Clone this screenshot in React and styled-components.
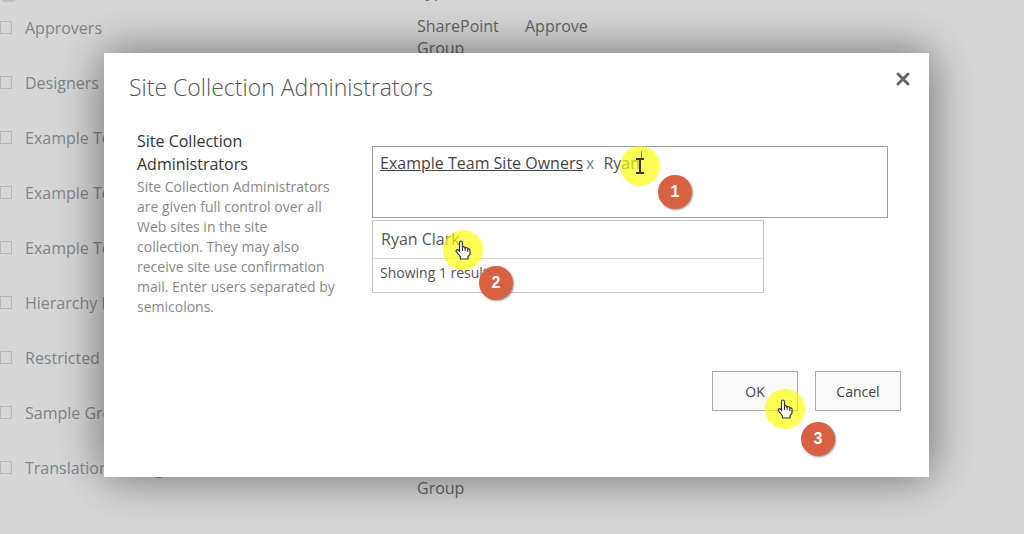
import React from 'react'
import styled, { createGlobalStyle } from 'styled-components'

const groups = [
  'Approvers',
  'Designers',
  'Example Team Site Members',
  'Example Team Site Owners',
  'Example Team Site Visitors',
  'Hierarchy Managers',
  'Restricted Readers',
  'Sample Group',
  'Translation Managers',
]

function HandCursor() {
  return (
    <Cursor viewBox="0 0 16 20">
      <path d="M4.500 11V3Q4.500 1 6 1T7.500 3V7Q8.200 6.500 9.200 6.900T10.200 8Q11 7.400 11.900 7.800T12.700 9Q13.500 8.600 14.300 9.100T15 10.500V14L13 17V19H5.500V17L1.200 11.500Q0.800 10 2.200 9.600Q3.500 9.800 4.500 11Z" fill="#fff" stroke="#333" strokeWidth="1.200" />
      <path d="M7.500 7V11M10.200 8V11M12.700 9V12" fill="none" stroke="#333" />
    </Cursor>
  )
}

function TextCursor() {
  return (
    <Cursor viewBox="0 0 16 20">
      <path d="M9.500 -5V3" fill="none" stroke="#8a8a3a" />
      <path d="M4 3H7L8 4L9 3H12M8 4V16M4 17H7L8 16L9 17H12" fill="none" stroke="#333" strokeWidth="2" />
    </Cursor>
  )
}

function App() {
  return (
    <Page>
      <GlobalStyle />
      <Permissions>
        <colgroup>
          <col width="25" />
          <col width="392" />
          <col width="108" />
          <col />
        </colgroup>
        <thead>
          <tr>
            <HeadCell><TickAll type="checkbox" aria-label="Select all" /></HeadCell>
            <HeadCell>Name</HeadCell>
            <HeadCell>Type</HeadCell>
            <HeadCell>Permission Levels</HeadCell>
          </tr>
        </thead>
        <tbody>
          {groups.map((name, i) => (
            <tr key={name}>
              <Cell><Tick type="checkbox" aria-label={name} /></Cell>
              <NameCell><GroupLink href="#">{name}</GroupLink></NameCell>
              <TypeCell>SharePoint Group</TypeCell>
              <Cell>{i === 0 ? 'Approve' : 'Design'}</Cell>
            </tr>
          ))}
        </tbody>
      </Permissions>

      <Overlay>
        <Dialog role="dialog" aria-labelledby="dialog-title">
          <TitleBar>
            <Title id="dialog-title">Site Collection Administrators</Title>
            <Close aria-label="Close">
              <svg width="14" height="14" viewBox="0 0 14 14">
                <path d="M2 2L12 12M12 2L2 12" stroke="#666" strokeWidth="3" strokeLinecap="round" />
              </svg>
            </Close>
          </TitleBar>

          <Section>
            <Info>
              <Label htmlFor="admins">Site Collection Administrators</Label>
              <Description>
                Site Collection Administrators are given full control over all Web sites in the site
                collection. They may also receive site use confirmation mail. Enter users separated by
                semicolons.
              </Description>
            </Info>
            <Picker>
              <PeopleBox>
                <Person href="#">Example Team Site Owners</Person>
                <Remove aria-label="Remove">x</Remove>
                <NameInput id="admins" defaultValue="Ryan" />
                <Marker $left={247} $top={-1}><TextCursor /></Marker>
                <Step $left={285} $top={28}>1</Step>
              </PeopleBox>
              <Results>
                <Result>Ryan Clark</Result>
                <Count>Showing 1 result</Count>
                <Marker $left={70} $top={9}><HandCursor /></Marker>
                <Step $left={106} $top={45}>2</Step>
              </Results>
            </Picker>
          </Section>

          <Footer>
            <Action>
              OK
              <Marker $left={52} $top={17}><HandCursor /></Marker>
              <Step $left={88} $top={50}>3</Step>
            </Action>
            <Action>Cancel</Action>
          </Footer>
        </Dialog>
      </Overlay>
    </Page>
  )
}

export default App

const GlobalStyle = createGlobalStyle`
  * {
    box-sizing: border-box;
  }
  body {
    margin: 0;
    background: #d6d6d6;
    font-family: "Open Sans", "Noto Sans", sans-serif;
  }
`

const Page = styled.div`
  position: relative;
  height: 100vh;
  overflow: hidden;
`

const Permissions = styled.table`
  width: 100%;
  margin-top: -23px;
  table-layout: fixed;
  border-collapse: collapse;
  color: #666;
  font-size: 16px;
  line-height: 22px;
`

const HeadCell = styled.th`
  height: 38px;
  padding: 3px 0 0;
  font-weight: 400;
  text-align: left;
  vertical-align: top;
`

const Cell = styled.td`
  height: 55px;
  padding: 0;
  vertical-align: top;
`

const NameCell = styled(Cell)`
  padding-top: 2px;
`

const TypeCell = styled(Cell)`
  padding-right: 24px;
`

const Tick = styled.input`
  display: block;
  appearance: none;
  width: 12px;
  height: 13px;
  margin: 6px 0 0;
  border: 1px solid #b8b8b8;
`

const TickAll = styled(Tick)`
  width: 15px;
  height: 15px;
  margin: 7px 0 0 1px;
  border: none;
  border-radius: 4px;
  background: #bfbfbf;
`

const GroupLink = styled.a`
  color: #7f878c;
  text-decoration: none;
`

const Overlay = styled.div`
  position: absolute;
  inset: 0;
  display: flex;
  align-items: flex-start;
  padding: 53px 95px 0 104px;
`

const Dialog = styled.div`
  flex: 1;
  padding: 18px 28px 66px 25px;
  background: #fff;
  box-shadow: 0 0 44px rgba(0, 0, 0, 0.5);
`

const TitleBar = styled.div`
  display: flex;
  justify-content: space-between;
  align-items: flex-start;
`

const Title = styled.h1`
  margin: 0;
  color: #555;
  font-size: 23px;
  font-weight: 300;
  line-height: 33px;
`

const Close = styled.button`
  display: flex;
  margin-right: -10px;
  padding: 1px;
  border: none;
  background: none;
`

const Section = styled.div`
  display: flex;
  align-items: flex-start;
  gap: 37px;
  margin-top: 26px;
`

const Info = styled.div`
  width: 206px;
  padding-left: 8px;
`

const Label = styled.label`
  display: block;
  width: 140px;
  color: #333;
  font-size: 16px;
  line-height: 23px;
`

const Description = styled.p`
  margin: 1px 0 0;
  color: #888;
  font-size: 14px;
  line-height: 20px;
`

const Picker = styled.div`
  flex: 1;
  padding: 16px 13px 0 0;
`

const PeopleBox = styled.div`
  position: relative;
  display: flex;
  align-items: flex-start;
  height: 72px;
  padding: 4px 7px;
  border: 1px solid #96a0a6;
  color: #555;
  font-size: 16px;
  line-height: 24px;
`

const Person = styled.a`
  color: #444;
`

const Remove = styled.button`
  padding: 0 3px;
  border: none;
  background: none;
  color: #7f878c;
  font: inherit;
`

const NameInput = styled.input`
  width: 100px;
  margin-left: 6px;
  padding: 0;
  border: none;
  color: #555;
  font: inherit;
`

const Results = styled.div`
  position: relative;
  width: 76%;
  margin-top: 2px;
  border: 1px solid #c6c6c6;
  color: #555;
`

const Result = styled.div`
  padding: 6px 8px 7px;
  border-bottom: 1px solid #d8d8d8;
  font-size: 16px;
  line-height: 24px;
`

const Count = styled.div`
  padding: 4px 7px 9px;
  font-size: 14px;
  line-height: 20px;
`

const Footer = styled.div`
  display: flex;
  justify-content: flex-end;
  gap: 17px;
  margin-top: 54px;
`

const Action = styled.button`
  position: relative;
  width: 86px;
  height: 40px;
  padding: 0;
  border: 1px solid #ababab;
  background: #fafafa;
  color: #444;
  font-family: inherit;
  font-size: 14px;
`

const Marker = styled.span`
  position: absolute;
  left: ${(props) => props.$left}px;
  top: ${(props) => props.$top}px;
  z-index: 1;
  display: flex;
  align-items: center;
  justify-content: center;
  width: 40px;
  height: 40px;
  border-radius: 50%;
  background: rgba(255, 255, 0, 0.66);
`

const Step = styled.span`
  position: absolute;
  left: ${(props) => props.$left}px;
  top: ${(props) => props.$top}px;
  z-index: 2;
  width: 34px;
  height: 34px;
  border-radius: 50%;
  background: #d96143;
  box-shadow: 1px 1px 2px rgba(0, 0, 0, 0.4);
  color: #fff;
  font-family: "Liberation Sans", Arial, sans-serif;
  font-size: 16px;
  font-weight: 700;
  line-height: 34px;
  text-align: center;
`

const Cursor = styled.svg`
  width: 16px;
  height: 20px;
  overflow: visible;
`
